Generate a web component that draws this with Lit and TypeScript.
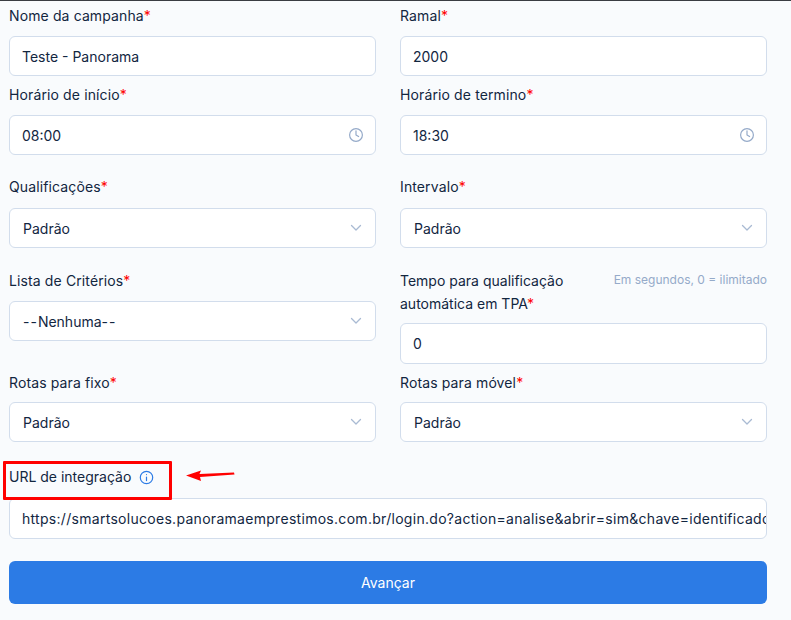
import { LitElement, html, css } from "lit";
import { customElement } from "lit/decorators.js";

const clock = html`<svg class="ico clock" width="16" height="16" viewBox="0 0 16 16" fill="none" stroke="#95aac9" stroke-width="1.2" stroke-linecap="round" stroke-linejoin="round"><circle cx="8" cy="8" r="6.4"/><path d="M8 3.8V8l2.6 1.5"/></svg>`;
const chevron = html`<svg class="ico" width="12" height="8" viewBox="0 0 12 8" fill="none" stroke="#a9bad3" stroke-width="1.3" stroke-linecap="round" stroke-linejoin="round"><path d="M1.5 1.5 6 6l4.5-4.5"/></svg>`;

@customElement("app-root")
export class AppRoot extends LitElement {
  static styles = css`
    :host { display: block; position: relative; width: 791px; height: 620px; overflow: hidden; background: #f9fbfd; border-top: 1px solid #3a3d42; box-sizing: border-box; font-family: Inter, "Noto Sans", sans-serif; font-size: 14px; color: #12263f; }
    .form { display: grid; grid-template-columns: 367px 367px; column-gap: 24px; padding: 5px 0 0 9px; }
    .field { display: flex; flex-direction: column; }
    .label { height: 20px; line-height: 20px; white-space: nowrap; margin-bottom: 10px; letter-spacing: 0.12px; }
    .label i { color: #f00; font-style: normal; }
    .box { box-sizing: border-box; height: 40px; background: #fff; border: 1px solid #d2ddec; border-radius: 6px; display: flex; align-items: center; justify-content: space-between; padding: 0 12px; white-space: nowrap; overflow: hidden; }
    .ico { flex: none; }
    .clock { margin-right: -1px; }
    .dash { letter-spacing: 1px; }
    .near { margin-top: 9px; }
    .far { margin-top: 22px; }
    .far .label { margin-bottom: 11px; }
    .sel .box { padding: 0 13px; }
    .near.sel .label { margin-bottom: 9px; }
    .far.lower { margin-top: 23px; }
    .far.lower .label { margin-bottom: 10px; }
    .tall .head { display: flex; justify-content: space-between; margin-bottom: 8px; }
    .tall .head .label { margin: 0; height: auto; white-space: normal; line-height: 22.5px; width: 190px; letter-spacing: 0; }
    .tall .box { height: 41px; }
    .hint { font-size: 12px; color: #95aac9; line-height: 20px; white-space: nowrap; }
    .url { width: 758px; margin: 25px 0 0 9px; }
    .url .label { display: flex; align-items: center; gap: 8px; margin-bottom: 11px; letter-spacing: 0; }
    .url .box { height: 41px; letter-spacing: 0.29px; justify-content: flex-start; }
    .btn { display: block; width: 758px; height: 43px; margin: 22px 0 0 9px; box-sizing: border-box; border: 0; border-radius: 6px; background: #2c7be5; color: #fff; font: inherit; text-align: center; padding: 0; }
    .mark { position: absolute; left: 3px; top: 460px; width: 169px; height: 39px; box-sizing: border-box; border: 3px solid #f00; border-radius: 1px; }
    .arrow { position: absolute; left: 184px; top: 466px; }
  `;

  private lbl(t: string) { return html`<div class="label">${t}<i>*</i></div>`; }

  render() {
    return html`
      <div class="form">
        <div class="field">${this.lbl("Nome da campanha")}<div class="box">Teste - Panorama</div></div>
        <div class="field">${this.lbl("Ramal")}<div class="box">2000</div></div>
        <div class="field near">${this.lbl("Horário de início")}<div class="box">08:00${clock}</div></div>
        <div class="field near">${this.lbl("Horário de termino")}<div class="box">18:30${clock}</div></div>
        <div class="field far sel">${this.lbl("Qualificações")}<div class="box">Padrão${chevron}</div></div>
        <div class="field far sel">${this.lbl("Intervalo")}<div class="box">Padrão${chevron}</div></div>
        <div class="field far lower sel">${this.lbl("Lista de Critérios")}<div class="box"><span><span class="dash">--</span>Nenhuma<span class="dash">--</span></span>${chevron}</div></div>
        <div class="field far tall">
          <div class="head"><div class="label">Tempo para qualificação automática em TPA<i>*</i></div><div class="hint">Em segundos, 0 = ilimitado</div></div>
          <div class="box">0</div>
        </div>
        <div class="field near sel">${this.lbl("Rotas para fixo")}<div class="box">Padrão${chevron}</div></div>
        <div class="field near sel">${this.lbl("Rotas para móvel")}<div class="box">Padrão${chevron}</div></div>
      </div>
      <div class="url">
        <div class="label">URL de integração
          <svg width="15" height="15" viewBox="0 0 15 15" fill="none" stroke="#2c7be5" stroke-width="1.2" stroke-linecap="round"><circle cx="7.5" cy="7.5" r="6.2"/><path d="M7.5 7v3.6M7.5 4.5v.1"/></svg>
        </div>
        <div class="box">https://smartsolucoes.panoramaemprestimos.com.br/login.do?action=analise&abrir=sim&chave=identificador</div>
      </div>
      <button class="btn">Avançar</button>
      <div class="mark"></div>
      <svg class="arrow" width="54" height="16" viewBox="0 0 54 16"><path d="M2 8.5 17 3.5 15.5 7 50 5.5 50.5 7.5 16 10 17 14Z" fill="#f00"/></svg>
    `;
  }
}
